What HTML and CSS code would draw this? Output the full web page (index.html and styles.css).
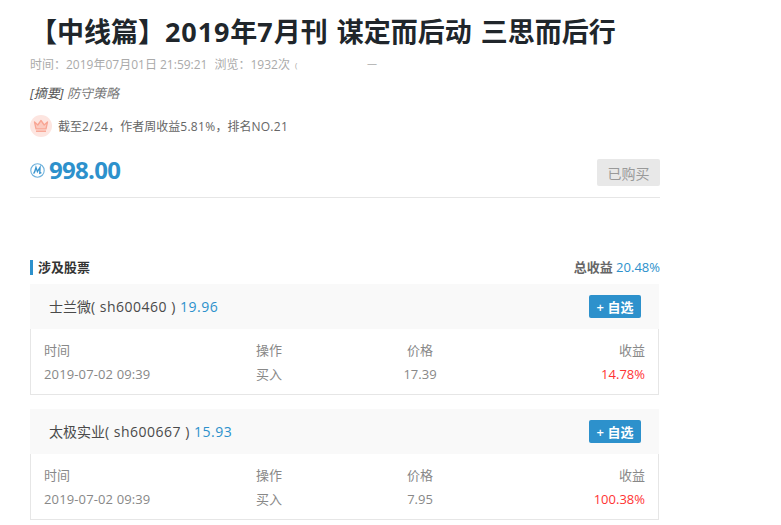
FILE: index.html
```html
<!DOCTYPE html>
<html lang="zh-CN">
<head>
<meta charset="utf-8">
<title>【中线篇】2019年7月刊</title>
<link rel="stylesheet" href="styles.css">
</head>
<body>
<main class="page">
  <h1 class="title">【中线篇】<span class="n">2019</span>年<span class="n">7</span>月刊 谋定而后动 三思而后行</h1>
  <div class="meta">
    <span>时间&#xFF1A;2019年07月01日 21:59:21</span>
    <span>浏览&#xFF1A;1932次</span>
    <span class="meta-tail"><span class="meta-clip">(</span><span class="meta-dash">一</span></span>
  </div>
  <p class="summary"><span class="summary-tag">[摘要]</span> 防守策略</p>
  <div class="rank">
    <span class="crown">
      <svg width="16" height="14" viewBox="0 0 16 14"><path d="M1.5 3 L4.8 6 L8 1.5 L11.2 6 L14.5 3 L13 9.8 H3 Z" fill="#fbcabf" stroke="#f8a593" stroke-width="1.3" stroke-linejoin="round"/><path d="M3 12.2 H13" stroke="#f8a593" stroke-width="1.5"/></svg>
    </span>
    <span>截至<span class="m">2/24</span>&#xFF0C;作者周收益<span class="m">5.81%</span>&#xFF0C;排名<span class="m">NO.21</span></span>
  </div>
  <div class="price-row">
    <div class="price">
      <svg class="coin" width="15" height="15" viewBox="0 0 15 15"><circle cx="7.5" cy="7.5" r="6.7" fill="none" stroke="#6fb2dc" stroke-width="1.1"/><path d="M3.6 10.6 C5 9 5.6 6 6 4.4 L7.4 8.6 L10 4.4 L9.8 10.2 L11.4 9.6" fill="none" stroke="#3a96d0" stroke-width="1.4"/></svg>
      <span class="amount">998.00</span>
    </div>
    <button class="bought">已购买</button>
  </div>

  <div class="section-head">
    <h2 class="section-title">涉及股票</h2>
    <div class="total"><b>总收益</b> <span class="blue">20.48%</span></div>
  </div>

  <section class="stock">
    <div class="stock-head">
      <div class="stock-name">士兰微<span class="s">( sh600460 ) </span><span class="s blue">19.96</span></div>
      <button class="add">+ 自选</button>
    </div>
    <div class="stock-body">
      <div class="col col-time"><span>时间</span><span class="d">2019-07-02 09:39</span></div>
      <div class="col col-op"><span>操作</span><span>买入</span></div>
      <div class="col col-price"><span>价格</span><span>17.39</span></div>
      <div class="col col-gain"><span>收益</span><span class="red">14.78%</span></div>
    </div>
  </section>

  <section class="stock">
    <div class="stock-head">
      <div class="stock-name">太极实业<span class="s">( sh600667 ) </span><span class="s blue">15.93</span></div>
      <button class="add">+ 自选</button>
    </div>
    <div class="stock-body">
      <div class="col col-time"><span>时间</span><span class="d">2019-07-02 09:39</span></div>
      <div class="col col-op"><span>操作</span><span>买入</span></div>
      <div class="col col-price"><span>价格</span><span>7.95</span></div>
      <div class="col col-gain"><span>收益</span><span class="red">100.38%</span></div>
    </div>
  </section>
</main>
</body>
</html>
```

FILE: styles.css
```css
* { box-sizing: border-box; }
html, body { margin: 0; padding: 0; background: #fff; height: 525px; overflow: hidden; }
body { font-family: "Open Sans", "Noto Sans CJK SC", sans-serif; color: #666; font-size: 13px; }
.page { width: 630px; margin-left: 30px; padding-top: 13px; }
.title { margin: 0; font-size: 27px; line-height: 38px; font-weight: 700; color: #20262b; white-space: nowrap; word-spacing: 2px; }
.title .n { letter-spacing: 0.9px; }
.meta { display: flex; gap: 7px; margin-top: 4px; height: 20px; line-height: 20px; font-size: 12px; color: #aaa; white-space: nowrap; }
.meta-tail { display: flex; width: 85px; margin-left: -2px; }
.meta-clip { font-size: 8px; width: 72px; }
.meta-dash { font-size: 10px; }
.summary { margin: 8px 0 0; line-height: 20px; font-size: 13px; font-style: italic; color: #777; }
.summary-tag { color: #555; }
.rank { display: flex; align-items: center; gap: 6px; margin-top: 11px; height: 24px; font-size: 12px; color: #666; }
.rank .m { letter-spacing: 0.3px; }
.crown { display: flex; align-items: center; justify-content: center; width: 22px; height: 22px; border-radius: 50%; background: #fde5e0; }
.price-row { display: flex; justify-content: space-between; align-items: flex-start; margin-top: 21px; padding-bottom: 11px; border-bottom: 1px solid #e6e6e6; }
.price { display: flex; align-items: center; gap: 4px; height: 22px; }
.amount { font-size: 24px; font-weight: 700; color: #2d91cc; line-height: 22px; letter-spacing: -0.7px; }
.bought { width: 63px; height: 27px; border: 0; border-radius: 2px; background: #e8e8e8; color: #999; font: 14px "Open Sans", "Noto Sans CJK SC", sans-serif; padding: 0; }
.section-head { display: flex; justify-content: space-between; align-items: center; margin-top: 62px; margin-bottom: 9px; height: 15px; padding-bottom: 2px; border-left: 3px solid #2d91cc; }
.section-title { margin: 0 0 0 5px; font-size: 13px; font-weight: 700; color: #333; }
.total { font-size: 13px; color: #666; }
.total b { font-weight: 700; color: #666; }
.blue { color: #2d91cc; }
.red { color: #f33; }
.stock { width: 629px; margin-bottom: 14px; }
.stock-head { display: flex; justify-content: space-between; align-items: center; height: 45px; padding: 0 18px 0 19px; background: #f9f9f9; }
.stock-name { font-size: 14px; color: #4a4a4a; padding-bottom: 2px; }
.stock-name .s { letter-spacing: 0.5px; }
.add { width: 52px; height: 23px; border: 0; border-radius: 2px; background: #2d91cc; color: #fff; font: 600 13px "Open Sans", "Noto Sans CJK SC", sans-serif; padding: 0; }
.stock-body { display: flex; height: 66px; padding: 12px 13px 0 13px; border: 1px solid #e6e6e6; border-top: 0; font-size: 13px; color: #888; }
.col { display: flex; flex-direction: column; gap: 6px; line-height: 18px; }
.d { letter-spacing: 0.13px; }
.col-time { width: 212px; }
.col-op { width: 114px; }
.col-price { width: 100px; text-align: center; }
.col-gain { flex: 1; text-align: right; }
```
